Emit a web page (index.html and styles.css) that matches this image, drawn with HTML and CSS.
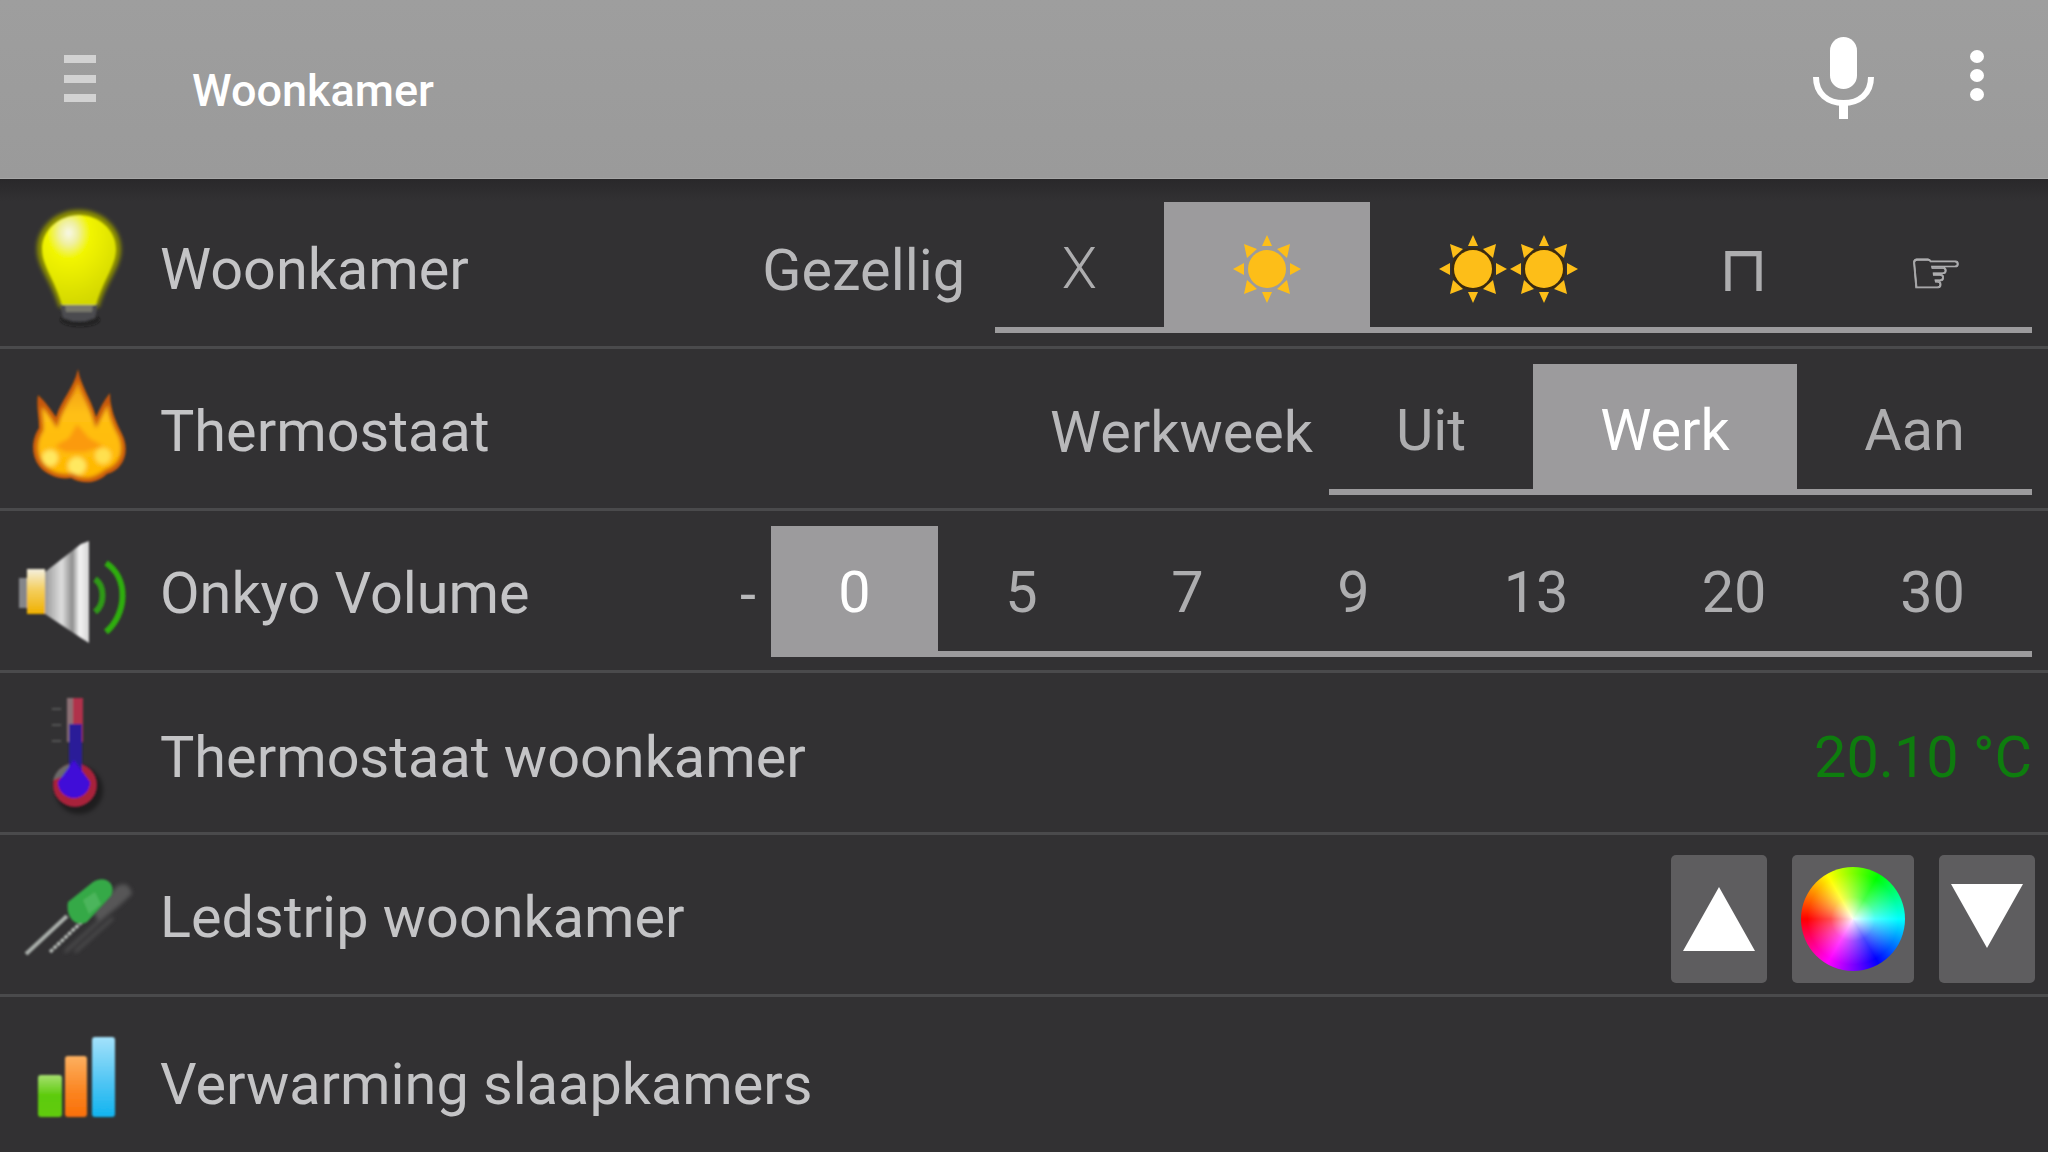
FILE: index.html
```html
<!DOCTYPE html>
<html lang="nl">
<head>
<meta charset="utf-8">
<title>Woonkamer</title>
<link rel="stylesheet" href="styles.css">
</head>
<body>
<svg class="defs" width="0" height="0" aria-hidden="true">
  <defs>
    <g id="sun">
      <circle r="19" fill="#fdbe18"/>
      <g id="rays" fill="#fdbe18">
        <path d="M0-34 L5-23 H-5Z"/><path d="M0 34 L5 23 H-5Z"/><path d="M-34 0 L-23-6 V6Z"/><path d="M34 0 L23-6 V6Z"/>
        <path d="M-23-25 L-10-20 L-20-11Z"/><path d="M23-25 L10-20 L20-11Z"/><path d="M-23 25 L-10 20 L-20 11Z"/><path d="M23 25 L10 20 L20 11Z"/>
      </g>
    </g>
    <filter id="soft" x="-20%" y="-20%" width="140%" height="140%"><feGaussianBlur stdDeviation="0.9"/></filter>
    <filter id="blur2" x="-30%" y="-30%" width="160%" height="160%"><feGaussianBlur stdDeviation="2.2"/></filter>
    <radialGradient id="bulbG" cx="0.36" cy="0.2" r="0.8">
      <stop offset="0" stop-color="#f8f8e8"/><stop offset="0.16" stop-color="#f0f0a0"/><stop offset="0.36" stop-color="#f2f500"/><stop offset="1" stop-color="#d4d800"/>
    </radialGradient>
    <linearGradient id="flameG" x1="0" y1="0" x2="0" y2="1">
      <stop offset="0" stop-color="#f09a10"/><stop offset="0.35" stop-color="#ffc014"/><stop offset="1" stop-color="#ffb800"/>
    </linearGradient>
    <linearGradient id="coneG" x1="0" y1="0" x2="1" y2="0">
      <stop offset="0" stop-color="#9a9a9a"/><stop offset="0.38" stop-color="#dedede"/><stop offset="0.62" stop-color="#8e8e8e"/><stop offset="0.78" stop-color="#f3f3f3"/><stop offset="1" stop-color="#d6d6d6"/>
    </linearGradient>
    <linearGradient id="coilG" x1="0" y1="0" x2="0" y2="1">
      <stop offset="0" stop-color="#f4f0e0"/><stop offset="0.45" stop-color="#f4cf60"/><stop offset="1" stop-color="#f0b000"/>
    </linearGradient>
    <linearGradient id="greenB" x1="0" y1="0" x2="0" y2="1"><stop offset="0" stop-color="#a6e070"/><stop offset="0.5" stop-color="#5ccb0a"/><stop offset="1" stop-color="#62cc10"/></linearGradient>
    <linearGradient id="orangeB" x1="0" y1="0" x2="0" y2="1"><stop offset="0" stop-color="#fdb060"/><stop offset="0.6" stop-color="#fb8420"/><stop offset="1" stop-color="#f96f08"/></linearGradient>
    <linearGradient id="blueB" x1="0" y1="0" x2="0" y2="1"><stop offset="0" stop-color="#a4e2fb"/><stop offset="0.55" stop-color="#52c6f4"/><stop offset="1" stop-color="#10b4f0"/></linearGradient>
  </defs>
</svg>

<header class="topbar">
  <div class="hamburger"><span></span><span></span><span></span></div>
  <h1 class="title">Woonkamer</h1>
  <svg class="mic" viewBox="0 0 61 82" width="61" height="82">
    <rect x="17" y="0" width="27" height="52" rx="13.5" fill="#fff"/>
    <path d="M3 40 C3 57 15 66 30.5 66 C46 66 58 57 58 40" fill="none" stroke="#fff" stroke-width="6"/>
    <rect x="26" y="64" width="9" height="18" fill="#fff"/>
  </svg>
  <div class="dots"><span></span><span></span><span></span></div>
</header>

<main class="list">
  <section class="row">
    <svg class="icon" viewBox="0 0 120 120">
      <path d="M60 2 C84 2 102 20 102 41 C102 60 88 72 80 99 H40 C32 72 18 60 18 41 C18 20 36 2 60 2Z" fill="#8d9000" filter="url(#blur2)"/>
      <g filter="url(#soft)">
        <ellipse cx="61" cy="112" rx="20" ry="7" fill="#111" opacity=".5"/>
        <path d="M41 96 H79 L76 110 Q60 117 44 110Z" fill="#4c4c50"/>
        <path d="M60 7 C80 7 97 22 97 41 C97 58 84 72 77 97 H43 C36 72 23 58 23 41 C23 22 40 7 60 7Z" fill="url(#bulbG)"/>
        <path d="M46 97 H74 L73 104 H47Z" fill="#77776c"/>
      </g>
    </svg>
    <span class="label">Woonkamer</span>
    <span class="state state-scene">Gezellig</span>
    <nav class="tabs tabs-scene">
      <a class="tab tab-thin">X</a>
      <a class="tab active"><svg class="sun" viewBox="-35 -35 70 70" width="70" height="70"><use href="#sun"/></svg></a>
      <a class="tab"><svg class="sun2" viewBox="-36 -35 143 70" width="143" height="70"><circle r="21.5" fill="#3a2a10"/><circle cx="71" r="21.5" fill="#3a2a10"/><use href="#sun"/><use href="#sun" x="71"/></svg></a>
      <a class="tab glyph door">⊓</a>
      <a class="tab glyph hand">☞</a>
    </nav>
  </section>

  <section class="row">
    <svg class="icon" viewBox="0 0 120 120">
      <g filter="url(#soft)">
        <path d="M59 -1 C62 17 72 28 77 47 C81 38 85 30 91 23 C91 38 96 50 103 64 C112 82 104 100 88 104 C80 112 66 116 52 108 C42 110 28 106 20 96 C11 84 13 68 20 58 C20 46 17 36 19 25 C26 31 32 40 37 47 C42 30 55 18 59 -1Z" fill="#c4560a"/>
      </g>
      <g filter="url(#blur2)">
        <path d="M59 10 C62 24 72 36 77 58 C81 48 85 41 89 34 C90 46 94 54 100 66 C107 82 100 96 86 100 C78 107 66 112 53 104 C42 106 30 102 24 94 C16 84 17 70 24 60 C24 50 22 44 23 36 C28 42 34 50 38 58 C42 38 55 26 59 10Z" fill="url(#flameG)"/>
        <path d="M58 54 L70 68 L84 76 L66 82 L46 82 L36 76 L50 68Z" fill="#fb9a0c"/>
        <circle cx="31" cy="88" r="8" fill="#ffe860"/><circle cx="58" cy="96" r="9" fill="#ffe860"/><circle cx="84" cy="86" r="8" fill="#ffe050"/>
      </g>
    </svg>
    <span class="label">Thermostaat</span>
    <span class="state state-heat">Werkweek</span>
    <nav class="tabs tabs-heat">
      <a class="tab">Uit</a>
      <a class="tab active">Werk</a>
      <a class="tab">Aan</a>
    </nav>
  </section>

  <section class="row">
    <svg class="icon" viewBox="0 0 120 120">
      <g filter="url(#soft)">
        <rect x="0" y="46" width="10" height="30" fill="#85868a"/>
        <path d="M8 37 H26 V82 H8Z" fill="url(#coilG)"/>
        <path d="M26 40 L62 12 L70 9 V111 L62 106 L26 82Z" fill="url(#coneG)"/>
        <path d="M76 47 C86 54 86 72 76 80" fill="none" stroke="#2f9a18" stroke-width="6"/>
        <path d="M87 31 C110 46 108 82 87 100" fill="none" stroke="#2eae10" stroke-width="6"/>
      </g>
    </svg>
    <span class="label">Onkyo Volume</span>
    <span class="state state-vol">-</span>
    <nav class="tabs tabs-vol">
      <a class="tab active">0</a>
      <a class="tab">5</a>
      <a class="tab">7</a>
      <a class="tab">9</a>
      <a class="tab">13</a>
      <a class="tab">20</a>
      <a class="tab">30</a>
    </nav>
  </section>

  <section class="row row-low">
    <svg class="icon" viewBox="0 0 120 120">
      <ellipse cx="60" cy="96" rx="24" ry="24" fill="#000" opacity=".4" filter="url(#blur2)"/>
      <g filter="url(#soft)">
        <circle cx="56" cy="91" r="22" fill="#a8203a"/>
        <path d="M34 86 A22 22 0 0 1 50 70 L50 80 Z" fill="#6a6a6a"/>
        <rect x="48" y="4" width="16" height="44" fill="#b0304c"/>
        <rect x="48" y="4" width="6" height="44" fill="#8c7074"/>
        <rect x="50" y="30" width="13" height="46" fill="#2a1a98"/>
        <path d="M55 66 L71 88 A16 16 0 1 1 39 88Z" fill="#3f10d8"/>
        <path d="M33 15 H42 M33 31 H42 M33 47 H42" stroke="#555" stroke-width="2"/>
      </g>
    </svg>
    <span class="label">Thermostaat woonkamer</span>
    <span class="reading">20.10 °C</span>
  </section>

  <section class="row">
    <svg class="icon" viewBox="0 0 120 120">
      <g filter="url(#blur2)" opacity=".6">
        <path d="M46 96 L88 58 M56 96 L94 62" stroke="#7c7c7c" stroke-width="2" fill="none"/>
        <path d="M80 66 L100 50 L113 38 Q110 24 98 30 L74 56Z" fill="#6f6f6f"/>
      </g>
      <g filter="url(#soft)">
        <path d="M7 98 L48 60" stroke="#a9aeaa" stroke-width="4"/>
        <path d="M31 96 L70 59" stroke="#b3b8b4" stroke-width="3.5" stroke-dasharray="4 1"/>
        <path d="M49 46 L74 26 C86 18 98 28 92 40 L68 66 C58 72 46 62 49 46Z" fill="#36a946"/>
        <path d="M64 44 L76 36 L82 48 L70 58Z" fill="#52b860" opacity=".8"/>
      </g>
    </svg>
    <span class="label">Ledstrip woonkamer</span>
    <div class="buttons">
      <button class="btn btn-arrow" type="button"><svg width="72" height="64" viewBox="0 0 72 64"><path d="M36 0 L72 64 H0Z" fill="#fff"/></svg></button>
      <button class="btn btn-wheel" type="button"><span class="wheel"></span></button>
      <button class="btn btn-arrow" type="button"><svg class="arrow-down" width="72" height="64" viewBox="0 0 72 64"><path d="M0 0 H72 L36 64Z" fill="#fff"/></svg></button>
    </div>
  </section>

  <section class="row row-last">
    <svg class="icon" viewBox="0 0 120 120">
      <g filter="url(#soft)">
        <rect x="19" y="56" width="24" height="42" rx="3" fill="url(#greenB)"/>
        <rect x="46" y="37" width="22" height="61" rx="3" fill="url(#orangeB)"/>
        <rect x="73" y="18" width="23" height="80" rx="3" fill="url(#blueB)"/>
      </g>
    </svg>
    <span class="label">Verwarming slaapkamers</span>
  </section>
</main>
</body>
</html>
```
FILE: styles.css
```css
* { box-sizing: border-box; }
html, body { margin: 0; height: 100%; }
body {
  width: 2048px;
  height: 1152px;
  overflow: hidden;
  background: #323133;
  font-family: Roboto, "Liberation Sans", sans-serif;
  display: flex;
  flex-direction: column;
}
.defs { position: absolute; }

/* Top bar */
.topbar {
  height: 179px;
  flex: none;
  display: flex;
  align-items: flex-start;
  background: linear-gradient(#9e9e9e, #9a9a9a);
  border-bottom: 1px solid #a6a6a6;
}
.hamburger {
  margin: 55px 0 0 64px;
  width: 32px;
  height: 47px;
  display: flex;
  flex-direction: column;
  justify-content: space-between;
}
.hamburger span { height: 8px; background: #d2d2d2; }
.title {
  margin: 66px 0 0 96px;
  font-size: 45px;
  line-height: 50px;
  font-weight: 500;
  color: #fff;
}
.mic { margin: 37px 0 0 auto; flex: none; }
.dots {
  margin: 50px 64px 0 96px;
  width: 14px;
  display: flex;
  flex-direction: column;
  gap: 6px;
}
.dots span { height: 13px; border-radius: 50%; background: #fff; }

/* Rows */
.list {
  flex: 1;
  padding-top: 8px;
  background: linear-gradient(#29282a, #323133 22px);
}
.row {
  height: 162px;
  border-bottom: 3px solid #4a4a4c;
  padding: 15px 16px 13px 19px;
  display: flex;
  align-items: center;
}
.icon { width: 120px; height: 120px; flex: none; overflow: visible; }
.label {
  margin-left: 21px;
  font-size: 57.6px;
  font-weight: 400;
  color: #c4c4c6;
  white-space: nowrap;
  position: relative;
  top: 2px;
}
.row-low .label, .row-low .reading { top: 4px; }
.row-last { border-bottom: 0; }
.row-last .label { top: 5px; }

.state {
  margin-left: auto;
  font-size: 57.6px;
  font-weight: 400;
  color: #b8b8ba;
  white-space: nowrap;
  position: relative;
  top: 3px;
}
.state-scene { margin-right: 30px; }
.state-heat { margin-right: 16px; }
.state-vol { margin-right: 15px; }

.tabs {
  align-self: stretch;
  display: grid;
  border-bottom: 6px solid #9c9b9d;
}
.tabs-scene { grid-template-columns: 169px 206px 277px 193px 192px; }
.tabs-heat { grid-template-columns: 204px 264px 235px; }
.tabs-vol { grid-template-columns: 167px 167px 165px 167px 198px 198px 199px; }
.tab {
  display: flex;
  align-items: center;
  justify-content: center;
  font-size: 57.6px;
  font-weight: 400;
  color: #adadaf;
  margin-bottom: -6px;
  padding-top: 2px;
}
.tab-thin { font-weight: 300; }
.tab.active { background: #9c9b9d; color: #fff; }
.glyph { font-family: "DejaVu Sans", sans-serif; }
.door { font-size: 64px; }
.hand {
  font-size: 62px;
  padding-top: 10px;
  -webkit-text-stroke: 0.8px #adadaf;
}

.reading {
  margin-left: auto;
  font-size: 57.6px;
  font-weight: 400;
  color: #0e7c0e;
  position: relative;
}

/* Buttons */
.buttons {
  margin: 7px -3px 0 auto;
  display: flex;
  gap: 25px;
}
.btn {
  height: 128px;
  border: 0;
  border-radius: 5px;
  background: #5e5d5f;
  padding: 0;
  display: flex;
  align-items: center;
  justify-content: center;
}
.btn-arrow { width: 96px; }
.arrow-down { margin-top: -6px; }
.btn-wheel { width: 122px; }
.wheel {
  width: 104px;
  height: 104px;
  border-radius: 50%;
  background:
    radial-gradient(circle, rgba(255,255,255,.95) 0, rgba(255,255,255,.3) 30%, rgba(255,255,255,0) 62%),
    conic-gradient(from 30deg, #00ff00, #00ffff 60deg, #0000ff 120deg, #ff00ff 180deg, #ff0000 240deg, #ffff00 300deg, #00ff00 360deg);
}
```
